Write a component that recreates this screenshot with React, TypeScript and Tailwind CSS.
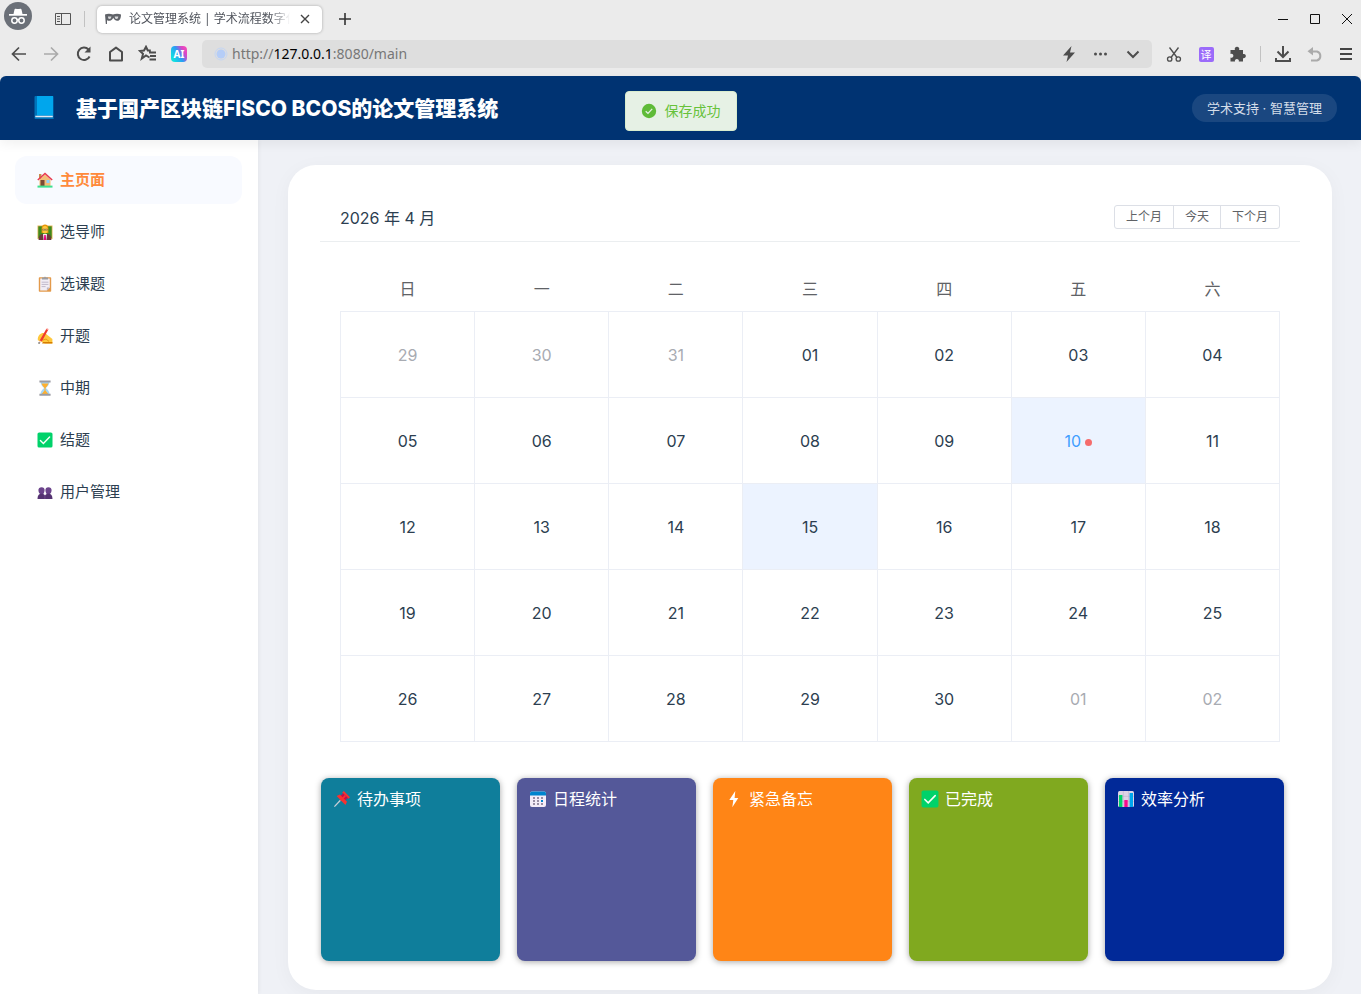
import type { ReactNode } from 'react';

const WEEKDAYS = ['日', '一', '二', '三', '四', '五', '六'];

type Day = { label: string; outside?: boolean; active?: boolean; marked?: boolean };

const WEEKS: Day[][] = [
  [
    { label: '29', outside: true },
    { label: '30', outside: true },
    { label: '31', outside: true },
    { label: '01' },
    { label: '02' },
    { label: '03' },
    { label: '04' },
  ],
  [
    { label: '05' },
    { label: '06' },
    { label: '07' },
    { label: '08' },
    { label: '09' },
    { label: '10', active: true, marked: true },
    { label: '11' },
  ],
  [
    { label: '12' },
    { label: '13' },
    { label: '14' },
    { label: '15', active: true },
    { label: '16' },
    { label: '17' },
    { label: '18' },
  ],
  ['19', '20', '21', '22', '23', '24', '25'].map((label) => ({ label })),
  [
    { label: '26' },
    { label: '27' },
    { label: '28' },
    { label: '29' },
    { label: '30' },
    { label: '01', outside: true },
    { label: '02', outside: true },
  ],
];

/* ---------- Emoji style icons ---------- */

function HouseIcon() {
  return (
    <svg viewBox="0 0 16 16" className="h-4 w-4">
      <rect x="2" y="2" width="2.4" height="5" fill="#c98b4e" />
      <path d="M2.5 7.5 8 2.5l5.500 5V14h-11z" fill="#f3bd78" />
      <path d="M.8 8 8 1.4 15.2 8" fill="none" stroke="#e8384f" strokeWidth="1.5" />
      <rect x="3.500" y="8" width="4" height="6" fill="#7b4a35" />
      <rect x="9.500" y="8" width="3" height="3" fill="#8fd0ff" />
      <rect x=".5" y="13.6" width="15" height="2" fill="#3ee08f" />
    </svg>
  );
}

function TeacherIcon() {
  return (
    <svg viewBox="0 0 16 16" className="h-4 w-4">
      <rect x=".5" y="1.5" width="15" height="13.5" fill="#e8b65a" />
      <rect x="1.3" y="2.3" width="13.4" height="11.8" fill="#3f8a1d" />
      <path d="M1.6 16c0-4 1.8-6 4.4-6h4c2.6 0 4.4 2 4.4 6z" fill="#6b3a3a" />
      <path d="M6 10h4l-.6 6H6.6z" fill="#f4f0f4" />
      <path d="M7.3 11h1.4l.5 5H6.8z" fill="#e6007e" />
      <path d="M4.6 9V4.6C4.6 1.8 6 .5 8 .5s3.4 1.3 3.4 4.1V9z" fill="#e6960a" />
      <ellipse cx="8" cy="5.7" rx="2.7" ry="3.7" fill="#ffc83d" />
      <path d="M5.6 5h2v1.3h-2zM8.4 5h2v1.3h-2z" fill="none" stroke="#6d5a5a" strokeWidth=".5" />
    </svg>
  );
}

function ClipboardIcon() {
  return (
    <svg viewBox="0 0 16 16" className="h-4 w-4">
      <rect x="1.8" y="1.2" width="12.4" height="14.5" rx=".8" fill="#e39a4b" />
      <path d="M3.2 2.6h9.6v9L9.9 14.4H3.2z" fill="#f1edf5" />
      <path d="M12.8 11.4H9.9v3z" fill="#bcb4c4" />
      <path d="M5 1.6h2L8 .4l1 1.2h2v2H5z" fill="#9b9da3" />
      <path d="M4.6 6.2h6.8M4.6 8.4h6.8M4.6 10.6h4" stroke="#c1b9cb" />
    </svg>
  );
}

function WritingIcon() {
  return (
    <svg viewBox="0 0 16 16" className="h-4 w-4">
      <path d="M.8 10.5C1.5 7 4 4.5 7.5 5.2c1.3.3 2.1 1.2 3.5 2.4l4.4 3.4V15.5H8L.8 12.2z" fill="#ffc83d" />
      <path d="M6 14h9.4v1.500H5z" fill="#d67d00" />
      <path d="m6 12 3-1 3 2.4" fill="none" stroke="#e89b13" />
      <path d="m9.3 1 1.8.9L5 13.3l-2.3 1.2.2-2.6z" fill="#f03a2e" />
      <path d="m9.3 1 .6-.8 1.7.8-.5.9z" fill="#ff8a80" />
      <path d="m2.9 12.6-.3 2.6 2.2-1.6z" fill="#f5d9b3" />
      <path d="M1.2 15h1.8" stroke="#444" />
    </svg>
  );
}

function HourglassIcon() {
  return (
    <svg viewBox="0 0 16 16" className="h-4 w-4">
      <path d="M3.5 1.6h9c0 3-1.7 4.9-3.7 6.4 2 1.5 3.7 3.4 3.7 6.4h-9c0-3 1.7-4.9 3.7-6.4-2-1.5-3.7-3.4-3.7-6.4z" fill="#a6d8f8" />
      <path d="M4.5 3.500h7c-.6 1.900-1.8 3.300-3 4.400v2.600l3 3.700H4.500l3-3.700V7.9c-1.2-1.100-2.4-2.500-3-4.400z" fill="#ffb02e" />
      <path d="M2.4.4h11.2v2H2.4zM2.4 13.7h11.2v2H2.4z" fill="#9b9ca3" />
    </svg>
  );
}

function CheckBoxIcon({ className = 'h-4 w-4' }: { className?: string }) {
  return (
    <svg viewBox="0 0 16 16" className={className}>
      <rect x=".5" y=".5" width="15" height="15" rx="1.6" fill="#00d26a" />
      <path d="m3.4 8.4 3 3 6.2-6.4" fill="none" stroke="#f8fff8" strokeWidth="1.4" strokeLinecap="round" />
    </svg>
  );
}

function UsersIcon() {
  return (
    <svg viewBox="0 0 16 16" className="h-4 w-4">
      <path d="M4.6 3.2c2 0 3 1.1 3 2.9S6.7 9.8 6.3 10H3c-.8-.6-1.600-2-1.600-3.900s1.200-2.900 3.200-2.900z" fill="#6b438b" />
      <path d="M11.4 3.2c2 0 3.200 1.100 3.200 2.900S13.800 9.400 13 10H9.7C9.3 9.800 8.4 8 8.4 6.100s1-2.900 3-2.900z" fill="#6b438b" />
      <path d="M.5 15c0-3.500 1.300-5.200 4.100-5.200 1.700 0 2.800.6 3.400 1.700.6-1.100 1.700-1.700 3.400-1.700 2.800 0 4.100 1.700 4.100 5.200z" fill="#553372" />
      <path d="M7.900 11v4" stroke="#8a63a8" strokeWidth=".5" />
    </svg>
  );
}

function PinIcon() {
  return (
    <svg viewBox="0 0 18 18" className="h-[18px] w-[18px]">
      <path d="m1.400 16.600 6-6.400" stroke="#c9ced6" strokeWidth="1.300" />
      <path d="m10.800 1 6.200 6.200-1.600 1.600L9.200 2.600z" fill="#f8312f" />
      <path d="m10 3.300 4.800 4.800-3.600 3-4.300-4.300z" fill="#ca0b4a" />
      <path d="m3.600 6 3.200-1.600 7.300 7.300-1.700 3.200z" fill="#f8312f" />
      <path d="m12.300 5.600-4.600 5" stroke="#f8312f" strokeWidth="1.600" />
    </svg>
  );
}

function CalendarIcon() {
  return (
    <svg viewBox="0 0 18 18" className="h-[18px] w-[18px]">
      <rect x="1" y="1.500" width="16" height="15.500" rx="2" fill="#f4ecf8" />
      <path d="M1 5.500v-2a2 2 0 0 1 2-2h12a2 2 0 0 1 2 2v2z" fill="#0084ce" />
      <g fill="#998ea4">
        {[7, 10, 13].map((y) => (
          <g key={y}>
            <rect x="4" y={y} width="2" height="2" />
            <rect x="8" y={y} width="2" height="2" />
            <rect x="12" y={y} width="2" height="2" fill={y === 10 ? '#0084ce' : undefined} />
          </g>
        ))}
      </g>
    </svg>
  );
}

function BoltIcon() {
  return (
    <svg viewBox="0 0 18 18" className="h-[18px] w-[18px]">
      <path d="m10.300 1-6 9h4L7.300 17.300l6-9.300H9.600z" fill="#fff" />
    </svg>
  );
}

function ChartIcon() {
  return (
    <svg viewBox="0 0 18 18" className="h-[18px] w-[18px]">
      <rect x="1" y="1" width="16" height="16" rx="1.500" fill="#dcd3e6" />
      <path d="M1 6.300h16M1 11.600h16M6.300 1v16M11.600 1v16" stroke="#b8a9c9" strokeWidth=".5" />
      <rect x="2" y="5" width="3.400" height="12" fill="#00d26a" />
      <rect x="7.300" y="10" width="3.400" height="7" fill="#f70a8d" />
      <rect x="12.600" y="3" width="3.400" height="14" fill="#00a6ed" />
    </svg>
  );
}

/* ---------- Browser frame ---------- */

function ToolButton({ label, children }: { label: string; children: ReactNode }) {
  return (
    <button type="button" aria-label={label} className="flex h-7 w-8 shrink-0 items-center justify-center">
      <svg viewBox="0 0 18 18" fill="none" stroke="#4d4d4d" strokeWidth="2" className="h-[18px] w-[18px]">
        {children}
      </svg>
    </button>
  );
}

function BrowserChrome() {
  return (
    <div className="bg-[#ebebeb] font-['Noto_Sans','Noto_Sans_CJK_SC',sans-serif]">
      <div className="flex h-[38px] items-center">
        <svg viewBox="0 0 28 28" className="mb-[6px] ml-1 h-7 w-7 shrink-0">
          <circle cx="14" cy="14" r="14" fill="#6b7078" />
          <path d="m9.500 12 1-4.500c.2-.7.700-1 1.300-.8 1.500.5 2.900.5 4.400 0 .6-.2 1.100.1 1.300.8l1 4.500z" fill="#fff" />
          <path d="M5 12h18v1.700H5z" fill="#fff" />
          <g fill="none" stroke="#fff" strokeWidth="1.500">
            <circle cx="10.500" cy="18.500" r="2.700" />
            <circle cx="17.500" cy="18.500" r="2.700" />
            <path d="M13 18q1-.7 2 0" />
          </g>
        </svg>
        <button type="button" aria-label="侧边栏" className="ml-[23px]">
          <svg viewBox="0 0 16 14" fill="none" stroke="#555" className="h-[14px] w-4">
            <path d="M.5 1.500h15v11H.5zM6.500 1.500v11M2 4.500h3M2 7h3M2 9.500h3" />
          </svg>
        </button>
        <span className="mr-3 ml-[13px] h-4 w-px bg-[#c2c2c2]" />
        <div className="flex h-[27px] w-[225px] items-center rounded-[5px] bg-white pr-3 pl-2 shadow-[0_0_3px_rgba(0,0,0,0.3)]">
          <svg viewBox="0 0 16 12" className="h-3 w-4 shrink-0">
            <path
              d="M0 1.500C2.500.4 5.500.5 8 1.500c2.500-1 5.500-1.100 8 0-.1 4-1.200 6.300-3.800 6.300-2 0-3-1.400-4-3-.8 1.600-1.800 3-3.600 3-1.300 0-2-.3-2.600-.9V11H.8z"
              fill="#5f6268"
            />
            <path d="M3 3.500h3.400c-.2 1.700-.8 2.500-1.900 2.500S3 5.200 3 3.500zM9.700 3.500h3.600c-.1 1.700-.7 2.500-1.800 2.500S9.800 5.200 9.700 3.500z" fill="#d7d8da" />
          </svg>
          <span className="ml-2 min-w-0 flex-1 overflow-hidden text-xs whitespace-nowrap text-[#50545c] [mask-image:linear-gradient(to_right,#000_88%,transparent)]">
            论文管理系统 | 学术流程数字化
          </span>
          <button type="button" aria-label="关闭标签页" className="ml-[10px]">
            <svg viewBox="0 0 10 10" stroke="#444" strokeWidth="1.400" className="h-[10px] w-[10px]">
              <path d="m1 1 8 8M9 1 1 9" />
            </svg>
          </button>
        </div>
        <button type="button" aria-label="新建标签页" className="ml-4">
          <svg viewBox="0 0 14 14" stroke="#333" strokeWidth="1.600" className="h-[14px] w-[14px]">
            <path d="M7 1v12M1 7h12" />
          </svg>
        </button>
        <div className="ml-auto flex gap-[18px] pr-[7px]">
          <button type="button" aria-label="最小化">
            <svg viewBox="0 0 14 14" stroke="#111" className="h-[14px] w-[14px]">
              <path d="M2 7.500h10" />
            </svg>
          </button>
          <button type="button" aria-label="最大化">
            <svg viewBox="0 0 14 14" fill="none" stroke="#111" className="h-[14px] w-[14px]">
              <path d="M2.500 2.500h9v9h-9z" />
            </svg>
          </button>
          <button type="button" aria-label="关闭">
            <svg viewBox="0 0 14 14" stroke="#111" className="h-[14px] w-[14px]">
              <path d="m2 2 10 10M12 2 2 12" />
            </svg>
          </button>
        </div>
      </div>

      <div className="flex h-[38px] items-start pt-[2px] pl-[3px]">
        <ToolButton label="后退">
          <path d="M16 9H3M9 2.500 2.500 9 9 15.500" strokeWidth="1.700" />
        </ToolButton>
        <ToolButton label="前进">
          <path d="M2 9h13M9 2.500 15.500 9 9 15.500" stroke="#aaa" strokeWidth="1.700" />
        </ToolButton>
        <ToolButton label="刷新">
          <path d="M15.600 11.500A6.200 6.200 0 1 1 14.500 4.500" />
          <path d="M16.500 1.500v6h-6z" fill="#4d4d4d" stroke="none" />
        </ToolButton>
        <ToolButton label="主页">
          <path d="M4 7 10 2.600 16 7v8.500H4z" strokeLinejoin="round" />
        </ToolButton>
        <ToolButton label="收藏夹">
          <path d="m11.500 12.500-3.500-2-4.200 3 1.200-4.600L2 6l4-.5 2-3.700 1.800 3.700h3M11 7.500h7M12 11h6M11.500 14.500h6.500" strokeWidth="2" />
        </ToolButton>
        <button type="button" aria-label="AI 助手" className="flex h-7 w-8 items-center justify-center">
          <span className="flex h-4 w-4 items-center justify-center rounded bg-[linear-gradient(60deg,#11dfe0_15%,#2c9af5_50%,#d946c8_75%,#ff4fb0)] text-[10px] leading-4 font-bold text-white">
            AI
          </span>
        </button>
        <div className="ml-[7px] flex h-7 min-w-0 flex-1 items-center rounded-[5px] bg-[#dedede] pr-[3px] pl-3">
          <svg viewBox="0 0 14 14" className="h-[14px] w-[14px] shrink-0">
            <circle cx="7" cy="7" r="6" fill="none" stroke="#c5d6f3" />
            <circle cx="7" cy="7" r="4.500" fill="#b5cdf7" />
          </svg>
          <div
            role="textbox"
            aria-label="地址栏"
            contentEditable
            suppressContentEditableWarning
            className="ml-1 flex-1 text-sm text-[#777] outline-none"
          >
            http://<span className="text-black">127.0.0.1</span>:8080/main
          </div>
          <ToolButton label="极速模式">
            <path d="M11.500 1 3 10.500h5L6.500 17 15 7.500h-5z" fill="#4d4d4d" stroke="none" />
          </ToolButton>
          <ToolButton label="更多">
            <g fill="#4d4d4d" stroke="none">
              <circle cx="3.500" cy="9" r="1.500" />
              <circle cx="8.500" cy="9" r="1.500" />
              <circle cx="13.500" cy="9" r="1.500" />
            </g>
          </ToolButton>
          <ToolButton label="展开">
            <path d="m3.500 6.500 5.500 5.500 5.500-5.500" />
          </ToolButton>
        </div>
        <div className="flex items-center pl-[6px]">
          <ToolButton label="截图">
            <g strokeWidth="1.300">
              <path d="M4.500 2.500 12 12.500M13.500 2.500 6 12.500" />
              <circle cx="4.700" cy="14" r="2.200" />
              <circle cx="13.300" cy="14" r="2.200" />
            </g>
          </ToolButton>
          <button type="button" className="flex h-7 w-8 items-center justify-center">
            <span className="h-[15px] w-[15px] rounded-xs bg-[#9b6bfa] text-center text-[11px] leading-[15px] text-white">译</span>
          </button>
          <ToolButton label="扩展">
            <path
              d="M1.500 5h4.400a2.300 2.300 0 1 1 4.200 0H14v4a2.200 2.200 0 1 1 0 4.200V16.500h-4.200a2 2 0 1 0-3.800 0H1.500v-4a2 2 0 1 0 0-3.600z"
              fill="#4d4d4d"
              stroke="none"
            />
          </ToolButton>
          <span className="mx-[6px] h-4 w-px bg-[#c2c2c2]" />
          <ToolButton label="下载">
            <path d="M9 1v10.500M3.500 6.500 9 12l5.500-5.500M2 13v3h14v-3" />
          </ToolButton>
          <ToolButton label="恢复">
            <path d="M5 15.500h6a4.700 4.700 0 0 0 0-9H4" stroke="#aaa" />
            <path d="M7 2v8.500L1.500 6.300z" fill="#aaa" stroke="none" />
          </ToolButton>
          <button type="button" aria-label="菜单" className="flex h-7 w-[30px] items-center justify-center">
            <svg viewBox="0 0 14 14" stroke="#444" strokeWidth="2" className="h-[14px] w-[14px]">
              <path d="M1 2h12M1 7h12M1 12h12" />
            </svg>
          </button>
        </div>
      </div>
    </div>
  );
}

/* ---------- Page ---------- */

function Header() {
  return (
    <header className="relative z-10 flex h-16 items-center justify-between rounded-t-md bg-[#003372] pr-6 pl-7 shadow-[0_4px_12px_rgba(0,0,0,0.06)]">
      <div className="flex items-center gap-4">
        <svg viewBox="0 0 32 32" className="h-8 w-8">
          <rect x="6.500" y="4" width="19" height="23" rx="1" fill="#0074ba" />
          <path d="M9 4h16v19.500H9z" fill="#00a6ed" />
          <path d="M7.300 24.500h17.500" stroke="#e4e8f2" strokeWidth="1.500" />
          <path d="M7 26.500h18.500" stroke="#0074ba" />
        </svg>
        <h1 className="pt-[2px] text-[21px] leading-8 font-extrabold text-white">基于国产区块链FISCO BCOS的论文管理系统</h1>
      </div>
      <span className="rounded-full bg-white/10 px-[15px] py-1 text-[13px] leading-5 text-[#d4dde9]">学术支持 · 智慧管理</span>

      <div
        role="alert"
        className="absolute top-[15px] left-1/2 flex h-10 -translate-x-1/2 items-center gap-2 rounded-sm border border-[#d9edce] bg-[#e6f1e5] px-[15px] text-sm whitespace-nowrap text-[#67c23a]"
      >
        <svg viewBox="0 0 16 16" className="h-4 w-4">
          <circle cx="8" cy="8" r="7.200" fill="#5fbb38" />
          <path d="m4.700 8.200 2.300 2.200 4.200-4.500" fill="none" stroke="#e6f1e5" strokeWidth="1.300" />
        </svg>
        保存成功
      </div>
    </header>
  );
}

const MENU = [
  { label: '主页面', icon: <HouseIcon />, active: true },
  { label: '选导师', icon: <TeacherIcon /> },
  { label: '选课题', icon: <ClipboardIcon /> },
  { label: '开题', icon: <WritingIcon /> },
  { label: '中期', icon: <HourglassIcon /> },
  { label: '结题', icon: <CheckBoxIcon /> },
  { label: '用户管理', icon: <UsersIcon /> },
];

function Sidebar() {
  return (
    <nav className="flex w-[258px] shrink-0 flex-col gap-1 bg-white py-4 pr-4 pl-[15px] shadow-[1px_0_4px_rgba(0,0,0,0.05)]">
      {MENU.map((item) => (
        <a
          key={item.label}
          href="#"
          className={
            item.active
              ? 'flex h-12 items-center gap-[7px] rounded-xl bg-[#f8faff] pl-[22px] text-[15px] font-bold text-[#ff8a3c]'
              : 'flex h-12 items-center gap-[7px] rounded-xl pl-[22px] text-[15px] text-[#2c3e50]'
          }
        >
          {item.icon}
          {item.label}
        </a>
      ))}
    </nav>
  );
}

function dayClass(day: Day) {
  if (day.outside) return 'text-[#a8abb2]';
  if (day.marked) return 'bg-[#ecf3ff] text-[#409eff]';
  if (day.active) return 'bg-[#ecf3ff] text-[#2c3e50]';
  return 'text-[#2c3e50]';
}

function Calendar() {
  return (
    <section>
      <div className="flex items-center justify-between border-b border-[#ebeef0] px-5 py-3">
        <h2 className="pt-[2px] text-base leading-[22px] text-[#2c3e50]">2026 年 4 月</h2>
        <div className="flex h-6 divide-x divide-[#dcdfe6] rounded-[3px] border border-[#dcdfe6] text-xs text-[#606266]">
          <button type="button" className="px-[11px]">上个月</button>
          <button type="button" className="px-[11px]">今天</button>
          <button type="button" className="px-[11px]">下个月</button>
        </div>
      </div>
      <div className="px-5 pt-6 pb-9">
        <table className="w-full table-fixed border-collapse text-base">
          <thead>
            <tr className="h-[45px] text-[#606266]">
              {WEEKDAYS.map((d) => (
                <th key={d} scope="col" className="pt-[2px] font-normal">
                  {d}
                </th>
              ))}
            </tr>
          </thead>
          <tbody>
            {WEEKS.map((week, i) => (
              <tr key={i} className="h-[86px]">
                {week.map((day) => (
                  <td key={day.label} className={`border border-[#ebeef5] pt-[2px] text-center ${dayClass(day)}`}>
                    {day.label}
                    {day.marked && (
                      <span className="ml-1 inline-block h-[7px] w-[7px] rounded-full bg-[#f56c6c] align-[1px]" />
                    )}
                  </td>
                ))}
              </tr>
            ))}
          </tbody>
        </table>
      </div>
    </section>
  );
}

const PANELS = [
  { title: '待办事项', icon: <PinIcon />, color: 'bg-[#0f7e9b]' },
  { title: '日程统计', icon: <CalendarIcon />, color: 'bg-[#545899]' },
  { title: '紧急备忘', icon: <BoltIcon />, color: 'bg-[#ff8516]' },
  { title: '已完成', icon: <CheckBoxIcon className="h-[18px] w-[18px]" />, color: 'bg-[#80a91f]' },
  { title: '效率分析', icon: <ChartIcon />, color: 'bg-[#012998]' },
];

export default function App() {
  return (
    <div className="flex min-h-screen flex-col bg-[#ebebeb] font-['Inter','Noto_Sans_CJK_SC',sans-serif]">
      <BrowserChrome />
      <Header />
      <div className="flex flex-1 bg-[#eff1f6]">
        <Sidebar />
        <main className="min-w-0 flex-1 pt-[25px] pr-[29px] pb-1 pl-[30px]">
          <div className="rounded-[28px] bg-white px-8 pt-7 pb-[29px] shadow-[0_4px_20px_rgba(0,0,0,0.04)]">
            <Calendar />
            <div className="grid grid-cols-5 gap-[17px] pr-4 pl-px">
              {PANELS.map((panel) => (
                <section
                  key={panel.title}
                  className={`h-[183px] rounded-lg px-3 py-[9px] shadow-[0_1px_6px_rgba(0,0,0,0.35)] ${panel.color}`}
                >
                  <h3 className="flex items-center gap-[6px] text-base leading-6 text-white">
                    {panel.icon}
                    {panel.title}
                  </h3>
                </section>
              ))}
            </div>
          </div>
        </main>
      </div>
    </div>
  );
}
